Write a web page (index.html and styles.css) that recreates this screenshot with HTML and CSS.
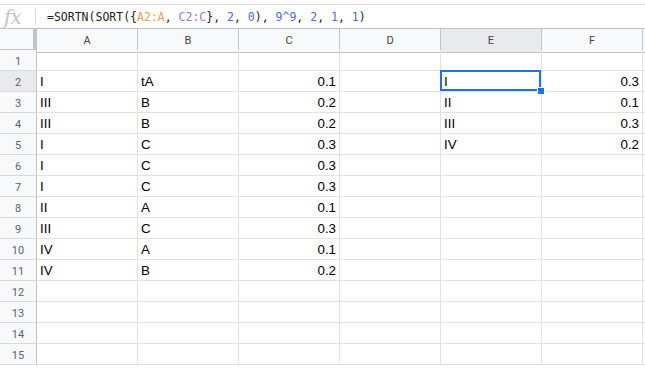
FILE: index.html
```html
<!DOCTYPE html>
<html lang="en">
<head>
  <meta charset="UTF-8" />
  <title>Sheet</title>
  <link rel="stylesheet" href="styles.css">
</head>
<body>
  <!-- Formula bar -->
  <div class="formula-bar">
    <div class="fx">fx</div>
    <div class="sep"></div>
    <div class="formula">=SORTN(SORT({<span class="ref-a">A2:A</span>, <span class="ref-c">C2:C</span>}, <span class="num">2</span>, <span class="num">0</span>), <span class="num">9^9</span>, <span class="num">2</span>, <span class="num">1</span>, <span class="num">1</span>)</div>
  </div>

  <!-- Grid -->
  <div class="grid" id="grid"></div>

  <script>
    const cols = ['A', 'B', 'C', 'D', 'E', 'F', 'G'];
    const data = {
      2: ['I', 'tA', '0.1', '', 'I', '0.3'],
      3: ['III', 'B', '0.2', '', 'II', '0.1'],
      4: ['III', 'B', '0.2', '', 'III', '0.3'],
      5: ['I', 'C', '0.3', '', 'IV', '0.2'],
      6: ['I', 'C', '0.3'],
      7: ['I', 'C', '0.3'],
      8: ['II', 'A', '0.1'],
      9: ['III', 'C', '0.3'],
      10: ['IV', 'A', '0.1'],
      11: ['IV', 'B', '0.2']
    };
    const numeric = [2, 5];
    const grid = document.getElementById('grid');
    let html = '<div class="corner"></div>';

    cols.forEach(c => {
      html += `<div class="col-head${c === 'E' ? ' active' : ''}">${c === 'G' ? '' : c}</div>`;
    });

    for (let r = 1; r <= 15; r++) {
      html += `<div class="row-head${r === 2 ? ' active' : ''}">${r}</div>`;
      const row = data[r] || [];
      cols.forEach((c, i) => {
        const val = row[i] || '';
        let cls = 'cell';
        if (numeric.includes(i)) cls += ' right';
        if (r === 2 && c === 'E') cls += ' selected';
        html += `<div class="${cls}">${val}</div>`;
      });
    }

    grid.innerHTML = html;
  </script>
</body>
</html>
```

FILE: styles.css
```css
* {
  box-sizing: border-box;
  margin: 0;
  padding: 0;
}

body {
  font-family: 'Liberation Sans', Arial, sans-serif;
  background: #fff;
  color: #000;
  overflow: hidden;
  padding-top: 4px;
}

/* === FORMULA BAR === */
.formula-bar {
  display: flex;
  align-items: center;
  height: 25px;
  border-top: 1px solid #e1e1e1;
  border-bottom: 1px solid #c4c4c4;
}

.fx {
  width: 35px;
  padding-left: 4px;
  font-family: 'DejaVu Serif', 'Liberation Serif', serif;
  font-style: italic;
  font-size: 20px;
  line-height: 20px;
  color: #c4c4c4;
  letter-spacing: -1px;
}

.sep {
  width: 1px;
  height: 16px;
  background: #dadada;
}

.formula {
  padding-left: 11px;
  font-family: 'DejaVu Sans Mono', 'Liberation Mono', monospace;
  font-size: 11.5px;
  color: #222;
  white-space: pre;
}

.ref-a { color: #f09b54; }
.ref-c { color: #9b77d3; }
.num { color: #4a6ccf; }

/* === GRID === */
.grid {
  display: grid;
  grid-template-columns: 37px repeat(6, 101px) 1fr;
  grid-auto-rows: 21px;
}

.corner,
.col-head,
.row-head {
  background: #f8f9fa;
  color: #5f6368;
  font-family: Roboto, 'Liberation Sans', sans-serif;
  font-size: 11px;
  display: flex;
  align-items: center;
  justify-content: center;
  border-right: 1px solid #c4c4c4;
  border-bottom: 1px solid #c4c4c4;
}

.corner {
  height: 24px;
  border-right: 4px solid #c4c4c4;
  border-bottom: 4px solid #c4c4c4;
}

.col-head {
  height: 24px;
  color: #444;
}

.row-head {
  border-right: 1px solid #c4c4c4;
  border-bottom: 1px solid #dadada;
  padding-top: 3px;
}

.col-head.active,
.row-head.active {
  background: #e8eaed;
}

.cell {
  border-right: 1px solid #e2e2e2;
  border-bottom: 1px solid #e2e2e2;
  font-size: 10pt;
  line-height: 18px;
  padding: 2px 3px 0;
  white-space: nowrap;
  overflow: hidden;
  position: relative;
}

.cell.right {
  text-align: right;
}

/* Selected cell */
.cell.selected {
  overflow: visible;
}

.cell.selected::before {
  content: "";
  position: absolute;
  top: -1px;
  left: -1px;
  right: 0;
  bottom: 0;
  border: 2px solid #1a73e8;
}

.cell.selected::after {
  content: "";
  position: absolute;
  right: -4px;
  bottom: -4px;
  width: 6px;
  height: 6px;
  background: #1a73e8;
  border: 1px solid #fff;
  z-index: 2;
}
```
